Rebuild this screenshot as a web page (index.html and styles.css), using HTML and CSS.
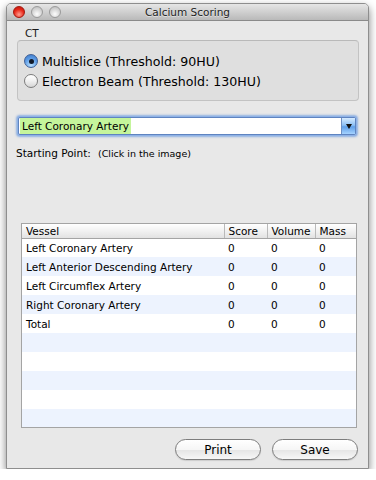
FILE: index.html
```html
<!DOCTYPE html>
<html lang="en">
<head>
  <meta charset="UTF-8">
  <title>Calcium Scoring</title>
  <link rel="stylesheet" href="styles.css">
</head>
<body>
  <div class="window">
    <div class="titlebar">
      <div class="lights">
        <span class="light close"></span>
        <span class="light"></span>
        <span class="light"></span>
      </div>
      <div class="title">Calcium Scoring</div>
      <div></div>
    </div>

    <div class="panel">
      <div class="group-label">CT</div>
      <div class="group">
        <label class="radio checked"><span class="knob"></span>Multislice (Threshold: 90HU)</label>
        <label class="radio"><span class="knob"></span>Electron Beam (Threshold: 130HU)</label>
      </div>

      <!-- Vessel selector -->
      <div class="combo">
        <span class="combo-text"><span class="sel">Left Coronary Artery</span></span>
        <span class="combo-btn"><span class="arrow"></span></span>
      </div>

      <div class="start">
        <span class="start-label">Starting Point:</span>
        <span class="start-hint">(Click in the image)</span>
      </div>

      <div class="grid-wrap">
        <table class="grid">
          <thead>
            <tr>
              <th class="c-vessel">Vessel</th>
              <th class="c-score">Score</th>
              <th class="c-volume">Volume</th>
              <th class="c-mass">Mass</th>
            </tr>
          </thead>
          <tbody>
            <tr><td>Left Coronary Artery</td><td>0</td><td>0</td><td>0</td></tr>
            <tr><td>Left Anterior Descending Artery</td><td>0</td><td>0</td><td>0</td></tr>
            <tr><td>Left Circumflex Artery</td><td>0</td><td>0</td><td>0</td></tr>
            <tr><td>Right Coronary Artery</td><td>0</td><td>0</td><td>0</td></tr>
            <tr><td>Total</td><td>0</td><td>0</td><td>0</td></tr>
            <tr><td></td><td></td><td></td><td></td></tr>
            <tr><td></td><td></td><td></td><td></td></tr>
            <tr><td></td><td></td><td></td><td></td></tr>
            <tr><td></td><td></td><td></td><td></td></tr>
            <tr><td></td><td></td><td></td><td></td></tr>
          </tbody>
        </table>
      </div>

      <div class="buttons">
        <button class="btn">Print</button>
        <button class="btn">Save</button>
      </div>
    </div>
  </div>
</body>
</html>
```

FILE: styles.css
```css
/* Reset & Base */
* {
  margin: 0;
  padding: 0;
  box-sizing: border-box;
  font-family: 'DejaVu Sans', sans-serif;
}
body {
  background: #fff;
  color: #000;
}
.window {
  width: 363px;
  margin: 3px 0 0 6px;
  background: #e8e8e8;
  border: 1px solid #8e8e8e;
  border-radius: 5px 5px 0 0;
  box-shadow: 0 4px 9px rgba(0,0,0,0.5);
}
/* Title bar */
.titlebar {
  height: 17px;
  display: grid;
  grid-template-columns: 1fr auto 1fr;
  align-items: center;
  background: linear-gradient(#e6e6e6, #b9b9b9);
  border-bottom: 1px solid #8a8a8a;
  border-radius: 4px 4px 0 0;
}
.lights {
  display: flex;
  gap: 6px;
  padding-left: 6px;
}
.light {
  width: 12px;
  height: 12px;
  border-radius: 50%;
  border: 1px solid #9a9a9a;
  background: radial-gradient(circle at 50% 70%, #fdfdfd, #d2d2d2 60%, #b8b8b8);
}
.light.close {
  border-color: #a3160c;
  background: radial-gradient(circle at 50% 75%, #ff9d8f, #e8281a 55%, #b9170c);
}
.title {
  font-size: 10.5px;
  color: #1e1e1e;
  text-shadow: 0 1px 0 rgba(255,255,255,0.5);
}
/* Panel content */
.panel {
  padding: 0 0 8px 0;
}
.group-label {
  margin: 6px 0 0 18px;
  font-size: 10.5px;
  line-height: 13px;
  color: #1a1a1a;
}
.group {
  margin: 0 9px 0 10px;
  padding: 10px 0 9px 6px;
  background: #dfdfdf;
  border: 1px solid #c3c3c3;
  border-top-color: #b9b9b9;
  border-radius: 4px;
}
.radio {
  display: flex;
  align-items: center;
  gap: 4px;
  height: 20px;
  font-size: 12.6px;
  color: #000;
}
.knob {
  width: 14px;
  height: 14px;
  border-radius: 50%;
  border: 1px solid #7c7c7c;
  background: linear-gradient(#ffffff, #f2f2f2 45%, #d6d6d6);
  display: flex;
  align-items: center;
  justify-content: center;
}
.radio.checked .knob {
  border-color: #3f5f95;
  background: radial-gradient(circle at 50% 85%, #b9e0ff, #5e9de6 55%, #3b78c8);
}
.radio.checked .knob::after {
  content: "";
  width: 5px;
  height: 5px;
  border-radius: 50%;
  background: #111a2a;
}
/* Combo box */
.combo {
  display: flex;
  height: 18px;
  margin: 16px 12px 0 11px;
  background: #fff;
  border: 1px solid #5f84c0;
  border-radius: 2px;
  box-shadow: 0 0 0 1px #8fb2e6, 0 0 2px 2px rgba(85,140,220,0.6);
}
.combo-text {
  flex: 1;
  display: flex;
  align-items: center;
  padding-left: 1px;
  font-size: 10.5px;
}
.sel {
  background: #c5f59c;
  padding: 1px 2px 1px 2px;
  line-height: 14px;
}
.combo-btn {
  width: 14px;
  display: flex;
  align-items: center;
  justify-content: center;
  border-left: 1px solid #6f8fc2;
  background: linear-gradient(#d6ebff, #8dc0f5 45%, #5f9fe9 55%, #a6d3ff);
}
.arrow {
  width: 0;
  height: 0;
  border-left: 3.5px solid transparent;
  border-right: 3.5px solid transparent;
  border-top: 5px solid #111;
}
.start {
  display: flex;
  align-items: baseline;
  margin: 11px 0 0 9px;
  line-height: 14px;
}
.start-label {
  width: 82px;
  font-size: 10.5px;
}
.start-hint {
  font-size: 9.5px;
}
/* Results table */
.grid-wrap {
  height: 205px;
  margin: 62px 11px 0 14px;
  background: #fff;
  border: 1px solid #a4a4a4;
  overflow: hidden;
}
.grid {
  width: 100%;
  border-collapse: collapse;
  table-layout: fixed;
  font-size: 10.5px;
}
.grid th {
  height: 14px;
  padding: 0 0 0 4px;
  text-align: left;
  font-weight: normal;
  background: linear-gradient(#ffffff, #f1f1f1 50%, #e2e2e2);
  border-bottom: 1px solid #a4a4a4;
  border-left: 1px solid #b9b9b9;
}
.grid th:first-child {
  border-left: none;
}
.c-vessel { width: 202px; }
.c-score { width: 43px; }
.c-volume { width: 48px; }
.grid td {
  height: 19px;
  padding: 0 0 0 4px;
  white-space: nowrap;
  overflow: hidden;
}
.grid tbody tr:nth-child(even) {
  background-color: #edf3fe;
}
/* Buttons */
.buttons {
  display: flex;
  justify-content: flex-end;
  gap: 11px;
  margin: 11px 10px 0 0;
}
.btn {
  width: 86px;
  height: 21px;
  font-size: 12px;
  color: #000;
  border: 1px solid #7d7d7d;
  border-radius: 11px;
  background: linear-gradient(#ffffff, #f6f6f6 50%, #e6e6e6 55%, #f7f7f7);
  box-shadow: 0 1px 1px rgba(0,0,0,0.12);
}
```
